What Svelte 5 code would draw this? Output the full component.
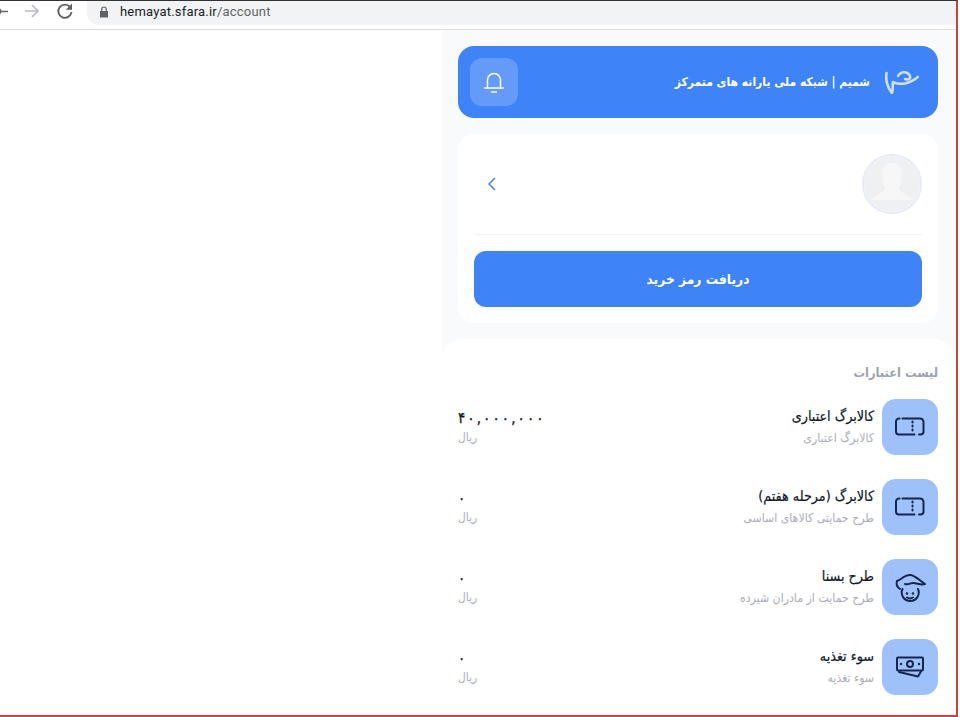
<script>
  const items = [
    { title: 'کالابرگ اعتباری', sub: 'کالابرگ اعتباری', amount: '۴۰,۰۰۰,۰۰۰', icon: 'ticket' },
    { title: 'کالابرگ (مرحله هفتم)', sub: 'طرح حمایتی کالاهای اساسی', amount: '۰', icon: 'ticket' },
    { title: 'طرح بسنا', sub: 'طرح حمایت از مادران شیرده', amount: '۰', icon: 'baby' },
    { title: 'سوء تغذیه', sub: 'سوء تغذیه', amount: '۰', icon: 'money' }
  ];
</script>

<div class="frame">
  <header class="chrome">
    <svg class="back" width="8" height="18" viewBox="0 0 8 18" fill="none" stroke="#5f6368" stroke-width="1.500"><path d="M0 9.500h8M-1 6l2 3.500-2 3.500"/></svg>
    <svg class="nav" width="18" height="18" viewBox="0 0 18 18" fill="none" stroke="#b9bcc0" stroke-width="1.700"><path d="M2 9h13M9 3l6 6-6 6"/></svg>
    <svg class="reload" width="18" height="18" viewBox="0 0 18 18" fill="none" stroke="#5f6368" stroke-width="1.900"><path d="M14.200 5.200A6.600 6.600 0 1 0 15.500 10"/><path d="M16 1.500v6.200H9.800z" fill="#5f6368" stroke="none"/></svg>
    <div class="omni">
      <svg width="10" height="12" viewBox="0 0 10 12"><path d="M1 5h8v6.500H1z" fill="#5f6368"/><path d="M2.800 5V3.200a2.200 2.200 0 0 1 4.400 0V5" fill="none" stroke="#5f6368" stroke-width="1.200"/></svg>
      <span class="url">hemayat.sfara.ir<em>/account</em></span>
    </div>
  </header>

  <div class="body">
    <div class="blank"></div>
    <main>
      <section class="banner">
        <div class="brand">
          <svg width="36" height="28" viewBox="0 0 36 28" fill="none" stroke="#cfe0fb" stroke-width="2.600" stroke-linecap="round" stroke-dasharray="3 0.600"><path d="M2.500 5c-1 8 1 14 5.500 20 1-4 .8-8 .8-11 6 3 15 3 25-5"/><path d="M14 8c3-5 10-5 12 0 1 3-2 4-5 3"/></svg>
          <span>شمیم | شبکه ملی یارانه های متمرکز</span>
        </div>
        <button class="bell" aria-label="اعلان‌ها">
          <svg width="24" height="24" viewBox="0 0 24 24" fill="none" stroke="#fff" stroke-width="1.500" stroke-linecap="round"><path d="M5.500 18V10a6.500 6.500 0 0 1 13 0v8"/><path d="M2.500 18h19"/><path d="M9.500 22h5"/></svg>
        </button>
      </section>

      <section class="profile">
        <div class="who">
          <div class="avatar">
            <svg width="56" height="56" viewBox="0 0 56 56"><circle cx="28" cy="28" r="28" fill="#eef0f2"/><path d="M18 19c0-8 4-12 10-12s10 4 10 12c0 6-2 11-3 14 1 3 6 5 11 8l3 3H7l3-3c5-3 10-5 11-8-1-3-3-8-3-14z" fill="#f7f7f8"/></svg>
          </div>
          <svg class="chev" width="12" height="18" viewBox="0 0 12 18" fill="none" stroke="#4b82d8" stroke-width="1.500"><path d="M9 3 3 9l6 6"/></svg>
        </div>
        <button class="cta">دریافت رمز خرید</button>
      </section>

      <section class="list">
        <h2>لیست اعتبارات</h2>
        {#each items as it}
          <div class="row">
            <div class="tile">
              {#if it.icon === 'ticket'}
                <svg width="30" height="20" viewBox="0 0 30 20" fill="none" stroke="#14264f" stroke-width="2" stroke-linecap="round" stroke-linejoin="round"><path d="M4.500 1.500H4A3 3 0 0 0 1 4.500v10a3 3 0 0 0 3 3h15.500"/><path d="M7.500 1.500H25a3.500 3.500 0 0 1 3.500 3.500v9.500a3 3 0 0 1-3 3H24"/><path d="M17.500 4.500v1M17.500 8.500v1M17.500 12.500v1"/></svg>
              {:else if it.icon === 'baby'}
                <svg width="32" height="32" viewBox="0 0 32 32" fill="none" stroke="#14264f" stroke-width="2" stroke-linecap="round" stroke-linejoin="round"><path d="M3 10c4-1 7-6 13-6 5 0 10 6 15 9-4 1.500-8-1-12-1-3 0-4 2-8 1"/><path d="M3 10c-1 3 0 6 3 8"/><path d="M8.500 18A8.500 8.500 0 1 0 24 18"/><circle cx="13" cy="22.500" r="1.200" fill="#14264f" stroke="none"/><circle cx="19" cy="22.500" r="1.200" fill="#14264f" stroke="none"/><path d="M13 26.500c2 1.300 4 1.300 6 0"/></svg>
              {:else}
                <svg width="30" height="22" viewBox="0 0 30 22" fill="none" stroke="#14264f" stroke-width="2" stroke-linecap="round" stroke-linejoin="round"><rect x="2" y="1.500" width="26" height="13" rx="1"/><circle cx="15" cy="8" r="3"/><circle cx="6" cy="8" r="1.200" fill="#14264f" stroke="none"/><circle cx="24" cy="8" r="1.200" fill="#14264f" stroke="none"/><path d="M4 16l19 4.500 3-5"/></svg>
              {/if}
            </div>
            <div class="text">
              <div class="title">{it.title}</div>
              <div class="sub">{it.sub}</div>
            </div>
            <div class="amount">
              <div class="num">{#each [...it.amount] as ch}<span>{ch}</span>{/each}</div>
              <div class="unit">ریال</div>
            </div>
          </div>
        {/each}
      </section>
    </main>
  </div>
</div>

<style>
  :global(body) {
    margin: 0;
    background: #fff;
  }
  .frame {
    width: 958px;
    height: 717px;
    box-sizing: border-box;
    overflow: hidden;
    display: flex;
    flex-direction: column;
    border-top: 1px solid #333;
    border-right: 2px solid #c8453f;
    border-bottom: 2px solid #c8453f;
    font-family: "DejaVu Sans Condensed", "DejaVu Sans", sans-serif;
  }
  .chrome {
    flex: none;
    height: 29px;
    display: flex;
    align-items: flex-start;
    box-sizing: border-box;
    border-bottom: 1px solid #dcdcdc;
    background: #fff;
  }
  .back {
    margin: 1px 15px 0 0;
  }
  .nav { margin: 1px 15px 0 0; }
  .reload { margin: 1px 13px 0 0; }
  .omni {
    flex: 1;
    height: 24px;
    background: #f1f3f4;
    border-radius: 0 0 0 12px;
    display: flex;
    align-items: center;
    gap: 11px;
    padding: 0 0 3px 12px;
    box-sizing: border-box;
  }
  .url {
    font: 13px "Roboto", sans-serif;
    letter-spacing: 0.2px;
    color: #202124;
  }
  .url em {
    font-style: normal;
    color: #5f6368;
  }
  .body {
    flex: 1;
    min-height: 0;
    display: flex;
  }
  .blank {
    width: 442px;
    flex: none;
    background: #fff;
  }
  main {
    width: 512px;
    flex: none;
    box-sizing: border-box;
    background: #f8fafc;
    padding-top: 16px;
    display: flex;
    flex-direction: column;
    gap: 16px;
  }
  .banner {
    flex: none;
    margin: 0 16px;
    height: 72px;
    border-radius: 16px;
    background: #3f83f8;
    display: flex;
    align-items: center;
    justify-content: space-between;
    flex-direction: row-reverse;
    padding: 0 12px;
  }
  .brand {
    direction: rtl;
    display: flex;
    align-items: center;
    gap: 14px;
    color: #fff;
    font-size: 12px;
    font-weight: 700;
    margin-right: 6px;
  }
  .bell {
    width: 48px;
    height: 48px;
    border: 0;
    padding: 0;
    border-radius: 12px;
    background: #649af9;
    display: flex;
    align-items: center;
    justify-content: center;
  }
  .profile {
    flex: none;
    margin: 0 16px;
    height: 189px;
    box-sizing: border-box;
    border-radius: 16px;
    background: #fff;
    padding: 0 16px;
  }
  .who {
    height: 101px;
    box-sizing: border-box;
    border-bottom: 1px solid #f1f3f6;
    display: flex;
    flex-direction: row-reverse;
    align-items: center;
    justify-content: space-between;
    margin-bottom: 16px;
  }
  .avatar {
    width: 60px;
    height: 60px;
    box-sizing: border-box;
    border: 2px solid #e6ecf6;
    border-radius: 50%;
    overflow: hidden;
    display: flex;
    align-items: center;
    justify-content: center;
  }
  .chev { margin-left: 12px; }
  .cta {
    display: block;
    width: 100%;
    height: 56px;
    border: 0;
    border-radius: 12px;
    background: #3f83f8;
    color: #fff;
    font: 700 13.700px "DejaVu Sans Condensed", "DejaVu Sans", sans-serif;
  }
  .list {
    flex: 1;
    background: #fff;
    border-radius: 20px 20px 0 0;
    padding: 24px 16px 0;
    direction: rtl;
  }
  h2 {
    margin: 0 0 16px;
    font-size: 12.800px;
    line-height: 20px;
    font-weight: 700;
    color: #9ca3af;
  }
  .row {
    height: 56px;
    margin-bottom: 24px;
    display: flex;
    align-items: center;
    gap: 8px;
  }
  .tile {
    width: 56px;
    height: 56px;
    flex: none;
    border-radius: 14px;
    background: #9fc1fa;
    display: flex;
    align-items: center;
    justify-content: center;
  }
  .text {
    flex: 1;
    margin-top: -2px;
  }
  .title {
    font-size: 14.200px;
    line-height: 20px;
    color: #111827;
    -webkit-text-stroke: 0.2px #111827;
  }
  .sub {
    margin-top: 4px;
    font-size: 12.200px;
    line-height: 16px;
    color: #a9aeb6;
  }
  .amount {
    margin-top: -2px;
  }
  .num {
    direction: ltr;
    display: flex;
    gap: 2.100px;
    font-size: 15px;
    line-height: 20px;
    color: #111827;
    -webkit-text-stroke: 0.3px #111827;
  }
  .unit {
    direction: rtl;
    text-align: left;
    margin-top: 1px;
    font-size: 11.800px;
    line-height: 16px;
    color: #a9aeb6;
  }
</style>
